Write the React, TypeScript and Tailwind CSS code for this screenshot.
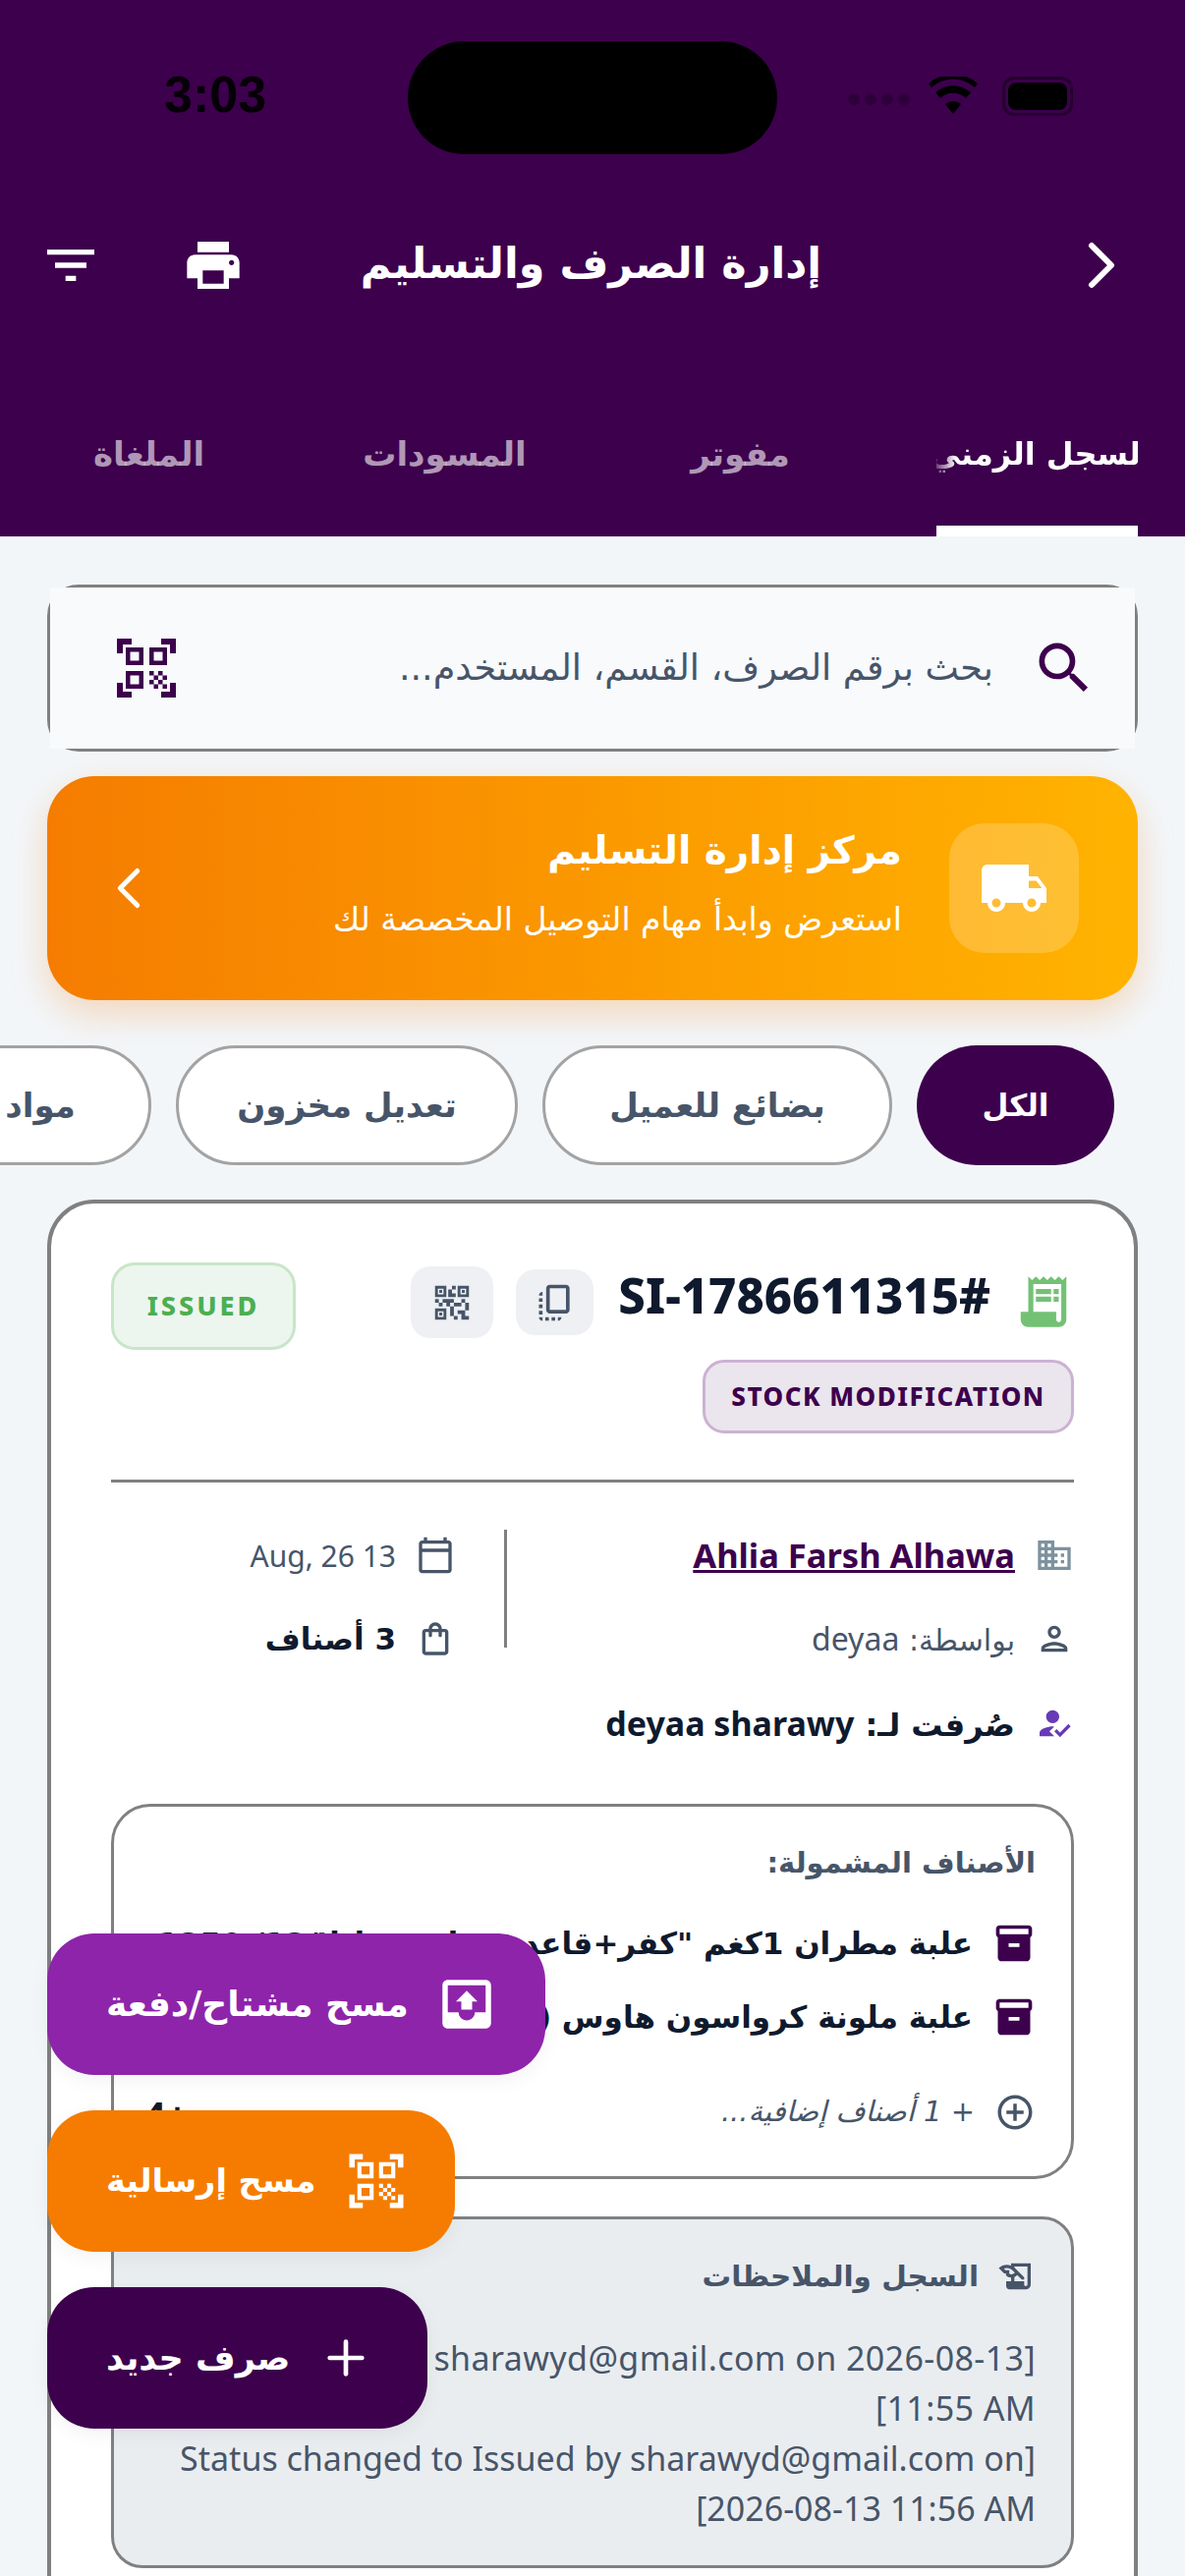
import { ChevronLeft, ChevronRight, Plus } from "lucide-react";
import {
  MdAddCircleOutline,
  MdFilterList,
  MdHistoryEdu,
  MdHowToReg,
  MdInventory2,
  MdLocalShipping,
  MdOutbox,
  MdOutlineCalendarToday,
  MdOutlineCopyAll,
  MdOutlineDomain,
  MdOutlinePerson,
  MdOutlineShoppingBag,
  MdPrint,
  MdQrCode2,
  MdQrCodeScanner,
  MdReceiptLong,
  MdSearch,
} from "react-icons/md";

const chips = [
  { label: "بضائع للعميل", width: "w-[356px]" },
  { label: "تعديل مخزون", width: "w-[348px]" },
  { label: "مواد خام", width: "w-[300px]" },
];

function StatusBar() {
  return (
    <div className="relative h-[200px]">
      <span className="absolute left-[167px] top-[68px] font-['Liberation_Sans'] text-[52px] font-bold leading-[56px] text-black/90">
        3:03
      </span>
      <div className="absolute left-[415px] top-[42px] h-[115px] w-[376px] rounded-full bg-black" />
      <div className="absolute left-[863px] top-[95px] flex gap-[5px] opacity-25">
        <span className="size-[12px] rounded-full bg-black" />
        <span className="size-[12px] rounded-full bg-black" />
        <span className="size-[12px] rounded-full bg-black" />
        <span className="size-[12px] rounded-full bg-black" />
      </div>
      <svg viewBox="0 0 50 38" className="absolute left-[945px] top-[78px] h-[38px] w-[50px]">
        <path d="M25 38 L17 28 A12 12 0 0 1 33 28 Z" />
        <path d="M12 22 A19 19 0 0 1 38 22 L43 16 A27 27 0 0 0 7 16 Z" />
        <path d="M3 11 A33 33 0 0 1 47 11 L50 7 A38 38 0 0 0 0 7 Z" />
      </svg>
      <div className="absolute left-[1020px] top-[78px] flex h-[40px] w-[72px] items-center rounded-[12px] border-[3px] border-black/40 p-[3px]">
        <div className="h-full w-full rounded-[8px] bg-black" />
      </div>
    </div>
  );
}

function Header() {
  return (
    <header className="h-[546px] bg-[#3d004d] text-white">
      <StatusBar />
      <div className="flex h-[140px] items-center pl-[40px] pr-[60px]">
        <ChevronRight size={80} strokeWidth={1.8} className="-mr-[15px] shrink-0" />
        <h1 className="mb-[4px] mr-[245px] whitespace-nowrap text-[43px] font-bold">إدارة الصرف والتسليم</h1>
        <div className="mr-auto flex items-center gap-[81px]">
          <MdPrint size={64} />
          <MdFilterList size={64} />
        </div>
      </div>
      <div className="mt-[60px] flex h-[146px] items-stretch pr-[48px] text-[34px] font-bold">
        <div className="relative flex w-[205px] items-center justify-start overflow-hidden">
          <span className="-mr-[14px] whitespace-nowrap pb-[22px] text-[32px] [mask-image:linear-gradient(to_left,black_88%,transparent)]">
            السجل الزمني
          </span>
          <div className="absolute inset-x-0 bottom-0 h-[11px] bg-white" />
        </div>
        <div className="mr-[49px] flex w-[301px] items-center justify-center pb-[22px] text-white/60">مفوتر</div>
        <div className="flex w-[301px] items-center justify-center pb-[22px] text-white/60">المسودات</div>
        <div className="flex w-[301px] items-center justify-center pb-[22px] text-white/60">الملغاة</div>
      </div>
    </header>
  );
}

function SearchBar() {
  return (
    <div className="mx-[48px] mt-[49px] h-[170px] rounded-[32px] border-[3px] border-[#808080]">
      <div className="flex h-full items-center justify-between gap-[38px] bg-[#f8fafc] pl-[62px] pr-[38px]">
        <MdSearch size={68} className="shrink-0 text-[#3d004d]" />
        <span className="flex-1 whitespace-nowrap text-[36.5px] text-[#475569]">بحث برقم الصرف، القسم، المستخدم...</span>
        <MdQrCodeScanner size={72} className="shrink-0 text-[#3d004d]" />
      </div>
    </div>
  );
}

function DeliveryBanner() {
  return (
    <div className="mx-[48px] mt-[25px] flex h-[228px] items-center rounded-[48px] bg-gradient-to-l from-[#ffb300] to-[#f57c00] pl-[48px] pr-[60px] text-white shadow-[0_14px_36px_rgba(245,124,0,0.25)]">
      <div className="flex size-[132px] shrink-0 items-center justify-center rounded-[36px] bg-white/20">
        <MdLocalShipping size={72} />
      </div>
      <div className="-mt-[12px] mr-[48px] flex-1">
        <div className="mb-[20px] text-[39px] font-bold leading-[56px]">مركز إدارة التسليم</div>
        <div className="whitespace-nowrap text-[33px] leading-[44px]">استعرض وابدأ مهام التوصيل المخصصة لك</div>
      </div>
      <ChevronLeft size={70} strokeWidth={1.7} />
    </div>
  );
}

function FilterChips() {
  return (
    <div className="mt-[46px] flex h-[122px] gap-[25px] overflow-hidden pr-[72px] text-[34px] font-semibold">
      <div className="flex w-[201px] shrink-0 items-center justify-center rounded-full bg-[#3d004d] text-[31px] text-white">الكل</div>
      {chips.map((chip) => (
        <div
          key={chip.label}
          className={`flex ${chip.width} shrink-0 items-center justify-center whitespace-nowrap rounded-full border-[3px] border-[#a3a3a3] bg-white text-[#475569]`}
        >
          {chip.label}
        </div>
      ))}
    </div>
  );
}

function InfoRow({ icon, children, className }: { icon: React.ReactNode; children: React.ReactNode; className?: string }) {
  return (
    <div className={`flex items-center gap-[20px] ${className ?? ""}`}>
      <span className="flex w-[40px] shrink-0 justify-center">{icon}</span>
      {children}
    </div>
  );
}

function IssueCard() {
  return (
    <div className="mx-[48px] mt-[35px] h-[1500px] rounded-[48px] border-[4px] border-[#808080] bg-white px-[61px] pt-[60px]">
      {/* Title row */}
      <div className="flex items-start">
        <MdReceiptLong size={62} className="mt-[9px] shrink-0 text-[#73c175]" />
        <span className="mr-[23px] font-['Noto_Sans'] text-[49px] font-extrabold leading-[66px] text-[#0f1a2e]">#SI-1786611315</span>
        <span className="mr-[25px] mt-[7px] flex h-[67px] w-[79px] items-center justify-center rounded-[20px] bg-[#eef0f3]">
          <MdOutlineCopyAll size={44} className="text-[#475569]" />
        </span>
        <span className="mr-[23px] mt-[4px] flex h-[73px] w-[84px] items-center justify-center rounded-[20px] bg-[#eef0f3]">
          <MdQrCode2 size={46} className="text-[#475569]" />
        </span>
        <span className="mr-auto flex h-[89px] w-[188px] items-center justify-center rounded-[24px] border-[3px] border-[#c8e6c9] bg-[#edf6ee] font-['Noto_Sans'] text-[27px] font-extrabold tracking-[3px] text-[#4caf50]">
          ISSUED
        </span>
      </div>
      <div className="mt-[10px] flex">
        <span className="flex h-[75px] w-[378px] items-center justify-center rounded-[22px] border-[3px] border-[#cbb2d2] bg-[#ebe5ed] font-['Noto_Sans'] text-[26px] font-extrabold tracking-[1.5px] text-[#3d004d]">
          STOCK MODIFICATION
        </span>
      </div>
      <div className="mt-[47px] h-[3px] bg-[#808080]" />

      {/* Details */}
      <div className="mt-[48px] flex">
        <div className="w-[577px] shrink-0">
          <InfoRow icon={<MdOutlineDomain size={40} className="text-[#7d929e]" />} className="h-[52px]">
            <span className="font-['Noto_Sans'] text-[34.5px] font-bold text-[#3d004d] underline">Ahlia Farsh Alhawa</span>
          </InfoRow>
          <InfoRow icon={<MdOutlinePerson size={42} className="text-[#475569]" />} className="mt-[33px] h-[52px]">
            <span className="text-[30px] text-[#475569]">
              بواسطة: <span className="font-['Noto_Sans'] text-[32px]">deyaa</span>
            </span>
          </InfoRow>
        </div>
        <div className="h-[120px] w-[3px] bg-[#808080]" />
        <div className="mr-[50px]">
          <InfoRow icon={<MdOutlineCalendarToday size={40} className="text-[#475569]" />} className="h-[52px]">
            <span className="font-['Noto_Sans'] text-[30px] text-[#475569]">13 Aug, 26</span>
          </InfoRow>
          <InfoRow icon={<MdOutlineShoppingBag size={40} className="text-[#475569]" />} className="mt-[33px] h-[52px]">
            <span className="text-[31px] font-bold text-[#0f1a2e]">3 أصناف</span>
          </InfoRow>
        </div>
      </div>
      <InfoRow icon={<MdHowToReg size={42} className="text-[#673ab7]" />} className="mt-[34px] h-[52px]">
        <span className="text-[32px] font-bold text-[#0f1a2e]">
          صُرفت لـ: <span className="font-['Noto_Sans'] text-[34px]">deyaa sharawy</span>
        </span>
      </InfoRow>

      {/* Included items */}
      <div className="mt-[56px] h-[382px] overflow-hidden rounded-[40px] border-[3px] border-[#808080] px-[36px] pt-[35px]">
        <div className="text-[29px] font-bold leading-[44px] text-[#475569]">الأصناف المشمولة:</div>
        <div className="mt-[38px] flex h-[44px] items-center gap-[20px]">
          <MdInventory2 size={44} className="shrink-0 text-[#3d004d]" />
          <span className="whitespace-nowrap text-[31px] font-bold text-[#0f1a2e]">علبة مطران 1كغم "كفر+قاعدة مطبوعة لبلا/12/ 1250</span>
        </div>
        <div className="mt-[31px] flex h-[44px] items-center gap-[20px]">
          <MdInventory2 size={44} className="shrink-0 text-[#3d004d]" />
          <span className="whitespace-nowrap text-[31px] font-bold text-[#0f1a2e]">علبة ملونة كرواسون هاوس (</span>
        </div>
        <div className="mt-[53px] flex h-[44px] items-center gap-[20px]">
          <MdAddCircleOutline size={42} className="shrink-0 text-[#475569]" />
          <span className="flex-1 text-[29px] italic text-[#475569]">+ 1 أصناف إضافية...</span>
          <span className="ml-[-6px] mt-[6px] font-['Noto_Sans'] text-[40px] font-bold text-[#0f1a2e]">+4</span>
        </div>
      </div>

      {/* Log */}
      <div className="mt-[38px] h-[358px] rounded-[32px] border-[3px] border-[#808080] bg-[#eaedf0] px-[36px] pt-[36px]">
        <div className="flex items-center gap-[18px] text-[29.5px] font-bold leading-[44px] text-[#475569]">
          <MdHistoryEdu size={40} />
          السجل والملاحظات
        </div>
        <p className="mt-[36px] font-['Noto_Sans'] text-[34px] leading-[51px] text-[#475569]">
          <span className="tracking-[0.4px]">[Issue created by sharawyd@gmail.com on 2026-08-13 11:55 AM]</span>
          <br />
          [Status changed to Issued by sharawyd@gmail.com on 2026-08-13 11:56 AM]
        </p>
      </div>
    </div>
  );
}

function ActionButton({ className, icon, label }: { className: string; icon: React.ReactNode; label: string }) {
  return (
    <button className={`flex h-[144px] items-center rounded-[48px] pl-[60px] font-bold text-white shadow-[0_6px_20px_rgba(0,0,0,0.05)] ${className}`}>
      {icon}
      {label}
    </button>
  );
}

export default function App() {
  return (
    <div dir="rtl" className="relative h-[2622px] w-[1206px] overflow-hidden bg-[#f3f6f9] font-['DejaVu_Sans',sans-serif]">
      <Header />
      <SearchBar />
      <DeliveryBanner />
      <FilterChips />
      <IssueCard />

      {/* Floating actions */}
      <div className="absolute bottom-[150px] left-[48px] flex flex-col items-end gap-[36px]">
        <ActionButton className="gap-[26px] bg-[#8e24aa] pr-[47px] text-[36px]" icon={<MdOutbox size={66} />} label="مسح مشتاح/دفعة" />
        <ActionButton className="gap-[28px] bg-[#f57c00] pr-[47px] text-[33.5px]" icon={<MdQrCodeScanner size={66} />} label="مسح إرسالية" />
        <ActionButton className="gap-[29px] bg-[#3d004d] pr-[55px] text-[35px]" icon={<Plus size={56} strokeWidth={2} />} label="صرف جديد" />
      </div>
    </div>
  );
}
